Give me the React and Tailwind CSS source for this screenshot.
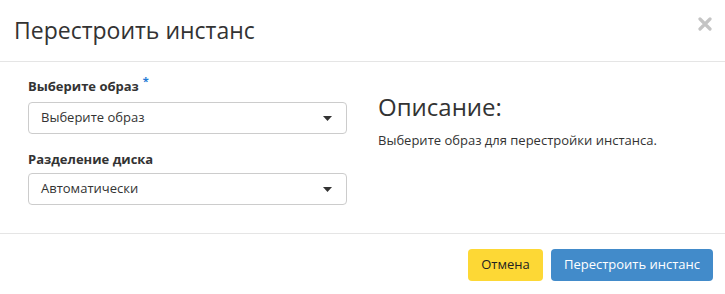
import React from 'react';

const Caret = () => (
  <svg width="9" height="5" viewBox="0 0 9 5" className="shrink-0">
    <path d="M0 0 H9 L4.5 5 Z" fill="#333" />
  </svg>
);

const SelectBox = ({ value }) => (
  <div className="h-[32px] w-full rounded-[4px] border border-[#cccccc] bg-white flex items-center justify-between pl-[12px] pr-[14px] text-[13px] text-[#333]">
    <span>{value}</span>
    <Caret />
  </div>
);

const App = () => {
  return (
    <div
      className="w-[725px] h-[294px] bg-white overflow-hidden text-[#333]"
      style={{ fontFamily: '"Open Sans", "Noto Sans", sans-serif' }}
    >
      <div className="h-[62px] border-b border-[#e5e5e5] flex items-start justify-between pl-[14px] pr-[13px] pt-[15px]">
        <h4 className="text-[23px] leading-[30px] font-normal text-[#333]">Перестроить инстанс</h4>
        <button className="mt-[2px] w-[14px] h-[14px] flex items-center justify-center">
          <svg width="14" height="14" viewBox="0 0 14 14">
            <path d="M2 2 L12 12 M12 2 L2 12" stroke="#c4c4c4" strokeWidth="3.2" strokeLinecap="round" />
          </svg>
        </button>
      </div>

      <div className="h-[172px] border-b border-[#e5e5e5] pl-[28px] pt-[15px] flex gap-[31px]">
        <div className="w-[319px]">
          <label className="block text-[13px] leading-[18px] font-bold text-[#333] mb-[6px]">
            Выберите образ
            <span className="relative -top-[6px] ml-[4px] text-[#1f7ad6] text-[11px]">*</span>
          </label>
          <SelectBox value="Выберите образ" />
          <label className="block mt-[16px] text-[13px] leading-[18px] font-bold text-[#333] mb-[5px]">
            Разделение диска
          </label>
          <SelectBox value="Автоматически" />
        </div>
        <div className="flex-1">
          <h3 className="mt-[17px] text-[24px] leading-[26px] font-normal text-[#333]">Описание:</h3>
          <p className="mt-[11px] text-[13px] leading-[18px] text-[#333]">
            Выберите образ для перестройки инстанса.
          </p>
        </div>
      </div>

      <div className="flex justify-end gap-[8px] pt-[15px] pr-[12px]">
        <button className="h-[32px] w-[75px] rounded-[4px] bg-[#fdd835] text-[13px] text-[#222]">
          Отмена
        </button>
        <button className="h-[32px] w-[162px] rounded-[4px] bg-[#428bca] text-[13px] text-white">
          Перестроить инстанс
        </button>
      </div>
    </div>
  );
};

export default App;
